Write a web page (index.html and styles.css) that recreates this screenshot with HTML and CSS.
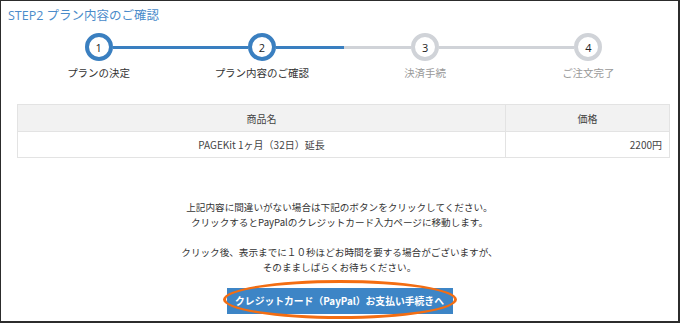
FILE: index.html
```html
<!DOCTYPE html>
<html lang="ja">
<head>
    <meta charset="UTF-8">
    <title>STEP2 プラン内容のご確認</title>
    <link rel="stylesheet" href="styles.css">
</head>
<body>
<div class="frame">
    <h2 class="step-title">STEP2 プラン内容のご確認</h2>

    <div class="content">
        <ol class="steps">
            <li class="step done">
                <div class="track">
                    <span class="seg none"></span>
                    <span class="circle">1</span>
                    <span class="seg on"></span>
                </div>
                <div class="label">プランの決定</div>
            </li>
            <li class="step done">
                <div class="track">
                    <span class="seg on"></span>
                    <span class="circle">2</span>
                    <span class="seg on"></span>
                </div>
                <div class="label">プラン内容のご確認</div>
            </li>
            <li class="step">
                <div class="track">
                    <span class="seg"></span>
                    <span class="circle">3</span>
                    <span class="seg"></span>
                </div>
                <div class="label">決済手続</div>
            </li>
            <li class="step">
                <div class="track">
                    <span class="seg"></span>
                    <span class="circle">4</span>
                    <span class="seg none"></span>
                </div>
                <div class="label">ご注文完了</div>
            </li>
        </ol>

        <table class="order">
            <thead>
                <tr>
                    <th>商品名</th>
                    <th class="col-price">価格</th>
                </tr>
            </thead>
            <tbody>
                <tr>
                    <td>PAGEKit 1ヶ月（32日）延長</td>
                    <td class="col-price price">2200円</td>
                </tr>
            </tbody>
        </table>
    </div>

    <p class="notice">
        上記内容に間違いがない場合は下記のボタンをクリックしてください。<br>
        クリックするとPayPalのクレジットカード入力ページに移動します。<br>
        <br>
        クリック後、表示までに１０秒ほどお時間を要する場合がございますが、<br>
        そのまましばらくお待ちください。
    </p>

    <div class="pay">
        <div class="pay-wrap">
            <button class="pay-btn">クレジットカード（PayPal）お支払い手続きへ</button>
            <span class="mark"></span>
        </div>
    </div>
</div>
</body>
</html>
```

FILE: styles.css
```css
html, body {
    margin: 0;
    padding: 0;
    background: #fff;
}

body {
    font-family: "Open Sans", "Noto Sans CJK JP", sans-serif;
    color: #333;
}

.frame {
    box-sizing: border-box;
    width: 680px;
    height: 323px;
    overflow: hidden;
    border-style: solid;
    border-color: #2c2c2c;
    border-width: 1px 2px 2px 1px;
}

.step-title {
    margin: 7px 0 0 7px;
    font-size: 12.5px;
    line-height: 16px;
    font-weight: 400;
    color: #4a8bca;
}

.content {
    margin: 0 8px 0 16px;
}

/* ステップ表示 */
.steps {
    list-style: none;
    margin: 9px 0 0;
    padding: 0;
    display: grid;
    grid-template-columns: repeat(4, 1fr);
}

.track {
    display: flex;
    align-items: center;
    height: 28px;
}

.seg {
    flex: 1;
    height: 3px;
    background: #d0d3d8;
}

.seg.on {
    background: #3a7fc0;
}

.seg.none {
    background: transparent;
}

.circle {
    box-sizing: border-box;
    width: 28px;
    height: 28px;
    border: 4px solid #d0d3d8;
    border-radius: 50%;
    display: flex;
    justify-content: center;
    align-items: center;
    font-size: 11px;
    color: #222;
}

.step.done .circle {
    border-color: #3a7fc0;
}

.label {
    margin-top: 6px;
    text-align: center;
    font-family: "Noto Sans CJK JP", sans-serif;
    font-size: 10.5px;
    line-height: 12px;
    color: #999;
}

.step.done .label {
    color: #333;
}

/* 注文内容 */
.order {
    width: 100%;
    margin-top: 25px;
    border-collapse: collapse;
    font-family: "Noto Sans CJK JP", sans-serif;
    font-size: 10px;
    color: #444;
}

.order th,
.order td {
    border: 1px solid #e3e3e3;
    text-align: center;
    padding: 0 7px;
}

.order th {
    height: 26px;
    background: #f2f2f2;
    font-weight: 400;
}

.order td {
    height: 25px;
}

.order .col-price {
    width: 149px;
}

.order .price {
    text-align: right;
}

.notice {
    margin: 42px 0 0;
    text-align: center;
    font-family: "Noto Sans CJK JP", sans-serif;
    font-size: 9.6px;
    line-height: 15px;
    color: #333;
}

.pay {
    display: flex;
    justify-content: center;
    margin-top: 13px;
}

.pay-wrap {
    position: relative;
}

.pay-btn {
    display: block;
    width: 226px;
    height: 26px;
    margin: 0;
    padding: 0;
    border: none;
    background: #3d85c6;
    color: #fff;
    font-family: "Noto Sans CJK JP", sans-serif;
    font-size: 9.8px;
    font-weight: 700;
    white-space: nowrap;
    cursor: pointer;
}

/* オレンジの囲み */
.mark {
    position: absolute;
    left: -4px;
    right: -4px;
    top: -8px;
    bottom: -5px;
    border: 3px solid #f36d12;
    border-radius: 50%;
    pointer-events: none;
}
```
